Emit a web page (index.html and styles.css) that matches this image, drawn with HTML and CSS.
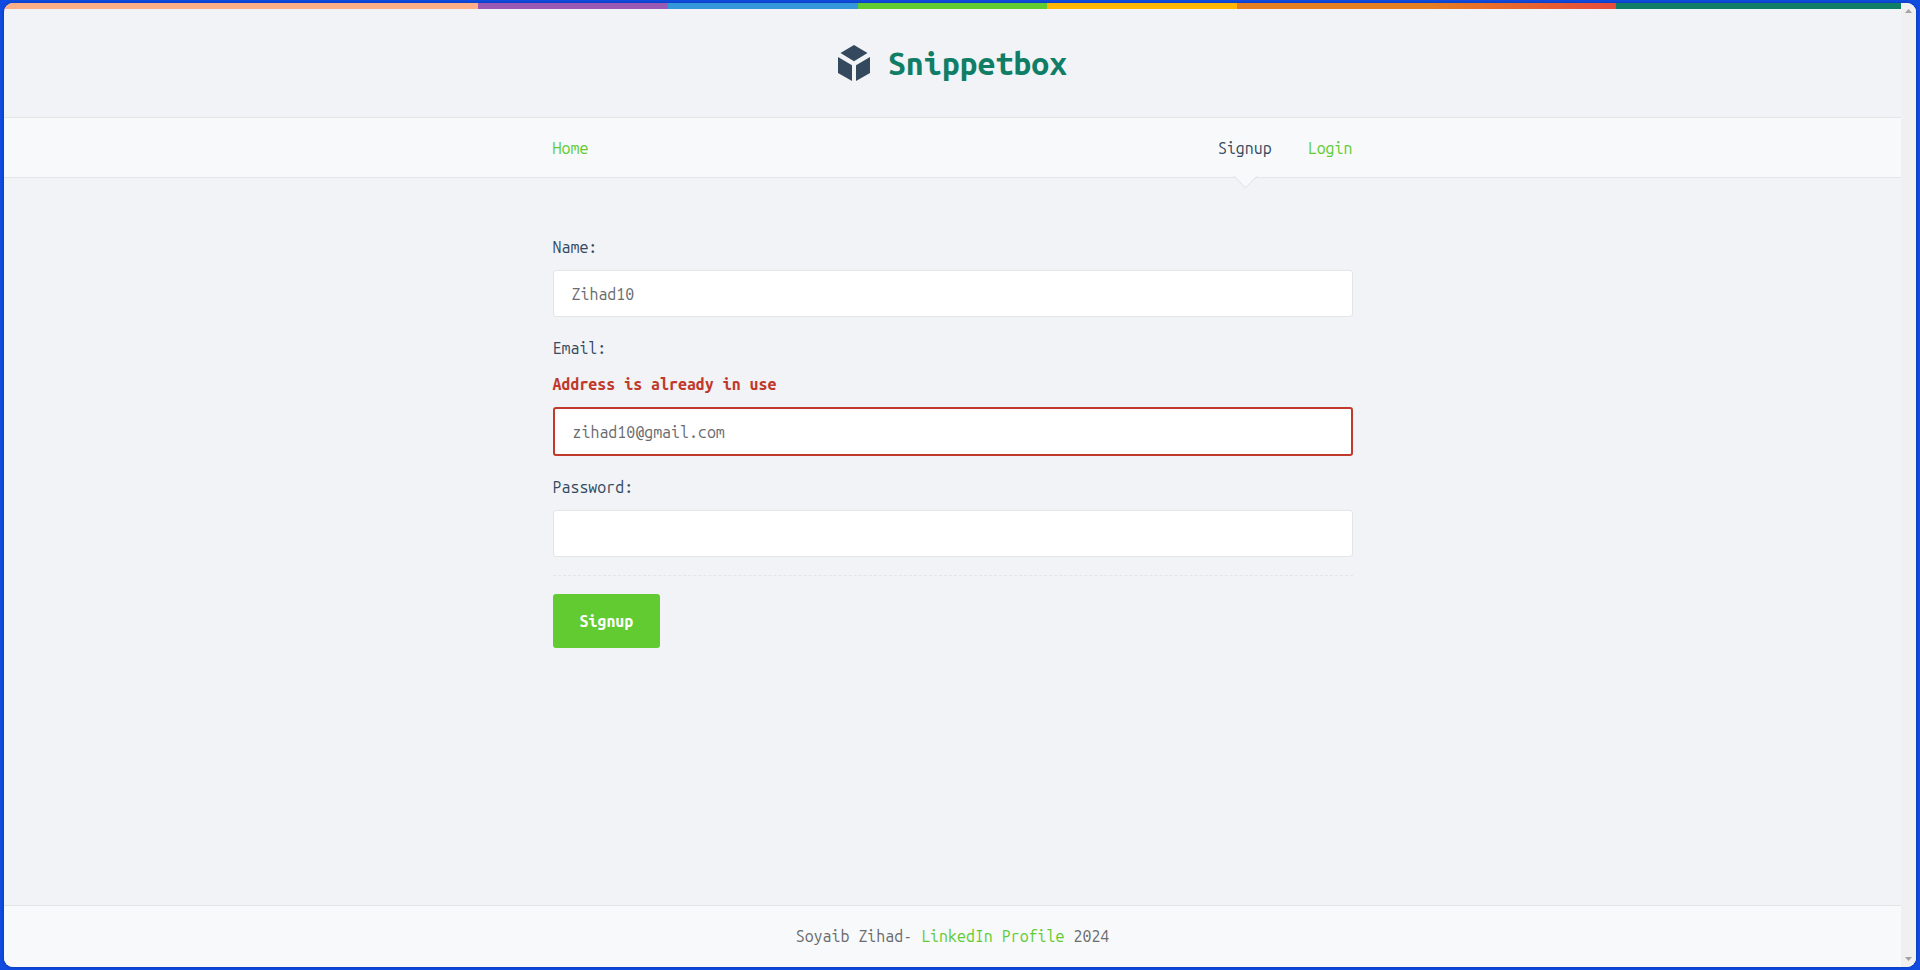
FILE: index.html
```html
<!DOCTYPE html>
<html lang="en">
<head>
<meta charset="utf-8">
<title>Signup - Snippetbox</title>
<link rel="stylesheet" href="styles.css">
</head>
<body>
<div class="window">
  <div class="page">
    <header class="header">
      <h1 class="brand">
        <a class="brand-link" href="#">
          <svg class="brand-icon" viewBox="0 0 32 36" aria-hidden="true"><path d="M16 0 29.5 8 16 16.2 2.5 8ZM0 12 14 20.3V36L0 28ZM32 12 18 20.3V36L32 28Z"/></svg>
          <span>Snippetbox</span>
        </a>
      </h1>
    </header>
    <nav class="nav">
      <div class="column nav-row">
        <a class="link" href="#">Home</a>
        <div class="nav-group">
          <a class="link link-live" href="#">Signup</a>
          <a class="link" href="#">Login</a>
        </div>
      </div>
    </nav>
    <main class="main">
      <form class="column form">
        <div class="field">
          <label for="name">Name:</label>
          <input class="input" id="name" type="text" value="Zihad10">
        </div>
        <div class="field">
          <label for="email">Email:</label>
          <label class="error" for="email">Address is already in use</label>
          <input class="input input-error" id="email" type="email" value="zihad10@gmail.com">
        </div>
        <div class="field">
          <label for="password">Password:</label>
          <input class="input" id="password" type="password">
        </div>
        <div class="actions">
          <button class="button" type="submit">Signup</button>
        </div>
      </form>
    </main>
    <footer class="footer">Soyaib Zihad- <a class="link" href="#">LinkedIn Profile</a> 2024</footer>
  </div>
  <div class="scrollbar" aria-hidden="true">
    <svg class="arrow" viewBox="0 0 7 4"><path d="M0 4 3.5 0 7 4Z"/></svg>
    <svg class="arrow" viewBox="0 0 7 4"><path d="M0 0 3.5 4 7 0Z"/></svg>
  </div>
</div>
</body>
</html>
```
FILE: styles.css
```css
* {
  box-sizing: border-box;
}

body {
  margin: 0;
  padding: 3px 4px;
  height: 100vh;
  background: #104ce0;
  color: #6a6c6f;
  font: 16px/27px "Ubuntu Mono", "DejaVu Sans Mono", monospace;
}

.window {
  display: flex;
  height: 100%;
  border-radius: 9px;
  overflow: hidden;
  background: #f1f3f6;
  box-shadow: 0 0 3px #0a2f9c;
}

.page {
  flex: 1;
  display: flex;
  flex-direction: column;
}

.page::before {
  content: "";
  height: 6px;
  background: linear-gradient(to right, #ffae88 25%, #9b59b6 25% 35%, #3498db 35% 45%, #62cb31 45% 55%, #ffb606 55% 65%, #e67e22 65% 75%, #e74c3c 85%, #107e66 85%);
}

.column {
  width: 100%;
  max-width: 800px;
  margin: 0 auto;
}

.header {
  padding: 36px 36px 30px;
  border-bottom: 1px solid #e4e5e7;
  text-align: center;
}

.brand {
  margin: 0;
  font-size: 32px;
  line-height: 36px;
}

.brand-link {
  display: inline-flex;
  align-items: center;
  gap: 18px;
  color: #107e66;
  text-decoration: none;
}

.brand-icon {
  width: 32px;
  height: 36px;
  fill: #34495e;
}

.nav {
  padding: 17px 0 15px;
  border-bottom: 1px solid #e4e5e7;
  background: #f7f9fa;
}

.nav-row {
  display: flex;
  justify-content: space-between;
}

.nav-group {
  display: flex;
  gap: 36px;
}

.link {
  color: #62cb31;
  text-decoration: none;
}

.link-live {
  position: relative;
  color: #34495e;
}

.link-live::after {
  content: "";
  position: absolute;
  left: 50%;
  bottom: -23px;
  width: 16px;
  height: 16px;
  margin-left: -8px;
  border: 1px solid #e4e5e7;
  border-width: 0 1px 1px 0;
  background: linear-gradient(135deg, transparent 45%, #f7f9fa 45%);
  transform: rotate(45deg);
}

.main {
  flex: 1;
  padding: 56px 0;
}

.form {
  color: #34495e;
}

.field {
  display: flex;
  flex-direction: column;
  gap: 9px;
  margin-bottom: 18px;
}

.error {
  color: #c0392b;
  font-weight: bold;
}

.input {
  width: 100%;
  height: 47px;
  padding: 0 18px;
  border: 1px solid #e4e5e7;
  border-radius: 3px;
  background: #fff;
  color: #6a6c6f;
  font: inherit;
}

.input-error {
  height: 49px;
  border: 2px solid #c0392b;
}

.actions {
  padding-top: 18px;
  border-top: 1px dashed #e4e5e7;
}

.button {
  display: block;
  padding: 14px 27px 13px;
  border: 0;
  border-radius: 3px;
  background: #62cb31;
  color: #fff;
  font: inherit;
  font-weight: bold;
}

.footer {
  padding: 17px;
  border-top: 1px solid #e4e5e7;
  background: #f7f9fa;
  text-align: center;
}

.scrollbar {
  display: flex;
  flex-direction: column;
  justify-content: space-between;
  align-items: center;
  width: 15px;
  padding: 6px 0;
  background: #f0f0f0;
}

.arrow {
  width: 7px;
  height: 4px;
  fill: #a3a3a3;
}
```
